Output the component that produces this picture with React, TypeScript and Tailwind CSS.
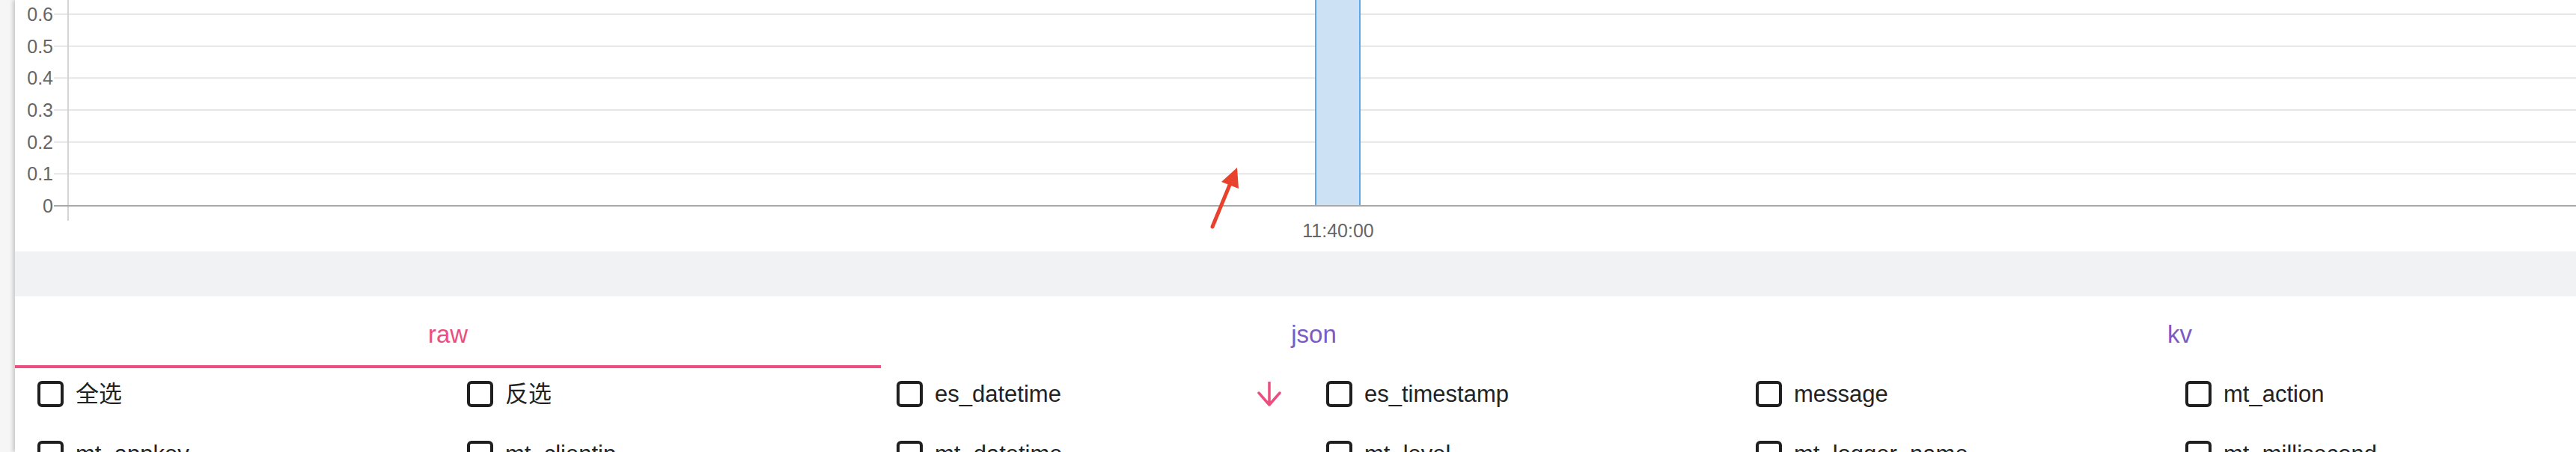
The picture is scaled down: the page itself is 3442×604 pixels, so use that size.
import { Fragment } from "react";

const yTicks = ["0.6", "0.5", "0.4", "0.3", "0.2", "0.1"];
const tabs = [
  { name: "raw", active: true },
  { name: "json", active: false },
  { name: "kv", active: false },
];
const fields = [
  "全选",
  "反选",
  "es_datetime",
  "es_timestamp",
  "message",
  "mt_action",
  "mt_appkey",
  "mt_clientip",
  "mt_datetime",
  "mt_level",
  "mt_logger_name",
  "mt_millisecond",
];

const fontStack = '"Liberation Sans", "Noto Sans CJK SC", sans-serif';

const HistogramChart = () => {
  const axisY = 275;
  const step = 42.67;
  return (
    <svg width="3422" height="336" className="block shrink-0" style={{ fontFamily: fontStack }}>
      {yTicks.map((label, i) => {
        const y = axisY - step * (6 - i);
        return (
          <Fragment key={label}>
            <line x1="52" x2="3422" y1={y} y2={y} stroke="#e6e6e6" strokeWidth="2" />
            <text x="51" y={y + 9} textAnchor="end" fontSize="25" fill="#666">
              {label}
            </text>
          </Fragment>
        );
      })}
      <rect x="1738" y="-4" width="59" height={axisY + 4} fill="#cce1f4" stroke="#5ca6ec" strokeWidth="2" />
      <line x1="71" x2="71" y1="0" y2="295" stroke="#d4d4d4" strokeWidth="2" />
      <line x1="52" x2="3422" y1={axisY} y2={axisY} stroke="#a8a8a8" strokeWidth="2" />
      <text x="51" y={axisY + 9} textAnchor="end" fontSize="25" fill="#666">
        0
      </text>
      <text x="1768" y="317" textAnchor="middle" fontSize="25" fill="#666">
        11:40:00
      </text>
      {/* red pointer arrow */}
      <line x1="1600" y1="303" x2="1626" y2="240" stroke="#e8412c" strokeWidth="5" strokeLinecap="round" />
      <polygon points="1633,224 1612,243 1635,252" fill="#e8412c" />
    </svg>
  );
};

const Checkbox = () => (
  <span className="w-[35px] h-[35px] shrink-0 rounded-[6px] border-[4px] border-[#1f1f1f] bg-white" />
);

const DownArrow = () => (
  <svg width="32" height="33" viewBox="0 0 32 33" className="ml-auto mr-[60px]">
    <path d="M16 1v30M2 15l14 16 14-16" fill="none" stroke="#ea4f7f" strokeWidth="3.5" strokeLinecap="round" strokeLinejoin="round" />
  </svg>
);

export default function App() {
  return (
    <div className="w-[3442px] h-[604px] overflow-hidden bg-[#f6f6f6] flex" style={{ fontFamily: fontStack }}>
      <div className="ml-[20px] flex-1 bg-white shadow-[-3px_0_5px_rgba(0,0,0,0.18)] flex flex-col">
        <HistogramChart />
        <div className="h-[60px] shrink-0 bg-[#f1f2f4]" />
        <div className="flex shrink-0">
          {tabs.map((tab) => (
            <div
              key={tab.name}
              className={
                tab.active
                  ? "w-[1157px] shrink-0 h-[96px] pt-[10px] flex items-center justify-center text-[33px] text-[#ea4f7f] border-b-[4px] border-[#ea4f7f]"
                  : "w-[1157px] shrink-0 h-[96px] pt-[10px] flex items-center justify-center text-[33px] text-[#7a5bc5] border-b-[4px] border-transparent"
              }
            >
              {tab.name}
            </div>
          ))}
        </div>
        <div className="grid shrink-0 grid-cols-[repeat(6,574px)] gap-y-[44px] pl-[30px] pt-[16px]">
          {fields.map((field) => (
            <div key={field} className="h-[36px] flex items-center gap-[16px] text-[31px] text-[#222]">
              <Checkbox />
              <span className="leading-none">{field}</span>
              {field === "es_datetime" && <DownArrow />}
            </div>
          ))}
        </div>
      </div>
    </div>
  );
}
